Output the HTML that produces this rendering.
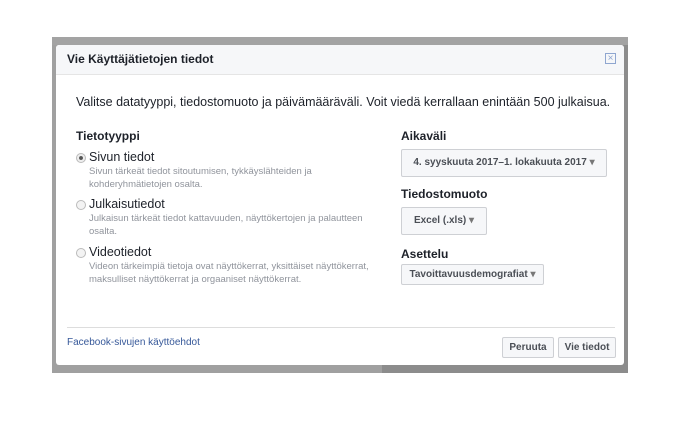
<!DOCTYPE html>
<html><head><meta charset="utf-8"><style>
body{margin:0;width:695px;height:432px;background:#fff;position:relative;overflow:hidden;font-family:"Liberation Sans",Helvetica,Arial,sans-serif;color:#1d2129}
.bd{position:absolute;left:52px;top:37px;width:576px;height:336px;background:#8c8c8c}
.bd .l{position:absolute;left:0;top:0;width:330px;height:336px;background:#a0a0a0}
.bd .top{position:absolute;left:0;top:0;width:576px;height:8px;background:#a3a3a3}
.m{position:absolute;left:56px;top:45px;width:568px;height:320px;background:#fff;border-radius:3px;overflow:hidden}
.hd{height:29px;background:#f6f7f9;border-bottom:1px solid #e5e5e5;font-size:12px;font-weight:bold;line-height:29px;padding-left:11px}
.x{position:absolute;right:8px;top:8px;width:11px;height:11px;border:1px solid #8fa6d0;box-sizing:border-box;color:#8fa6d0;font-size:10px;line-height:9px;text-align:center}
.p{position:absolute;font-size:12px}
.h{font-weight:bold;font-size:12px;position:absolute}
.r{position:absolute;left:20px;font-size:12px}
.r i{position:absolute;left:0;top:3px;width:8px;height:8px;border:1px solid #bbb;border-radius:50%;background:#f3f3f3}
.r b{font-weight:normal;margin-left:13px;font-size:12.5px}
.r div{margin-left:13px;font-size:9.5px;color:#90949c;line-height:12.5px;margin-top:2px}
.btn{position:absolute;background:#f6f7f9;border:1px solid #ced0d4;border-radius:2px;font-size:10px;font-weight:bold;color:#4b4f56;text-align:center;box-sizing:border-box}
.sel:after{content:" \25BE";color:#777}
.ft{position:absolute;left:11px;right:9px;top:282px;border-top:1px solid #ddd}
</style></head><body>
<div class="bd"><div class="l"></div><div class="top"></div></div>
<div class="m">
<div class="hd">Vie Käyttäjätietojen tiedot</div>
<div class="x">×</div>
<div class="p" style="left:20px;top:50px;font-size:12.5px;color:#1d2129">Valitse datatyyppi, tiedostomuoto ja päivämääräväli. Voit viedä kerrallaan enintään 500 julkaisua.</div>
<div class="h" style="left:20px;top:84px">Tietotyyppi</div>
<div class="r" style="top:105px;width:300px"><i style="background:radial-gradient(#555 30%,#eee 40%)"></i><b>Sivun tiedot</b><div>Sivun tärkeät tiedot sitoutumisen, tykkäyslähteiden ja<br>kohderyhmätietojen osalta.</div></div>
<div class="r" style="top:152px;width:300px"><i></i><b>Julkaisutiedot</b><div>Julkaisun tärkeät tiedot kattavuuden, näyttökertojen ja palautteen<br>osalta.</div></div>
<div class="r" style="top:200px;width:320px"><i></i><b>Videotiedot</b><div>Videon tärkeimpiä tietoja ovat näyttökerrat, yksittäiset näyttökerrat,<br>maksulliset näyttökerrat ja orgaaniset näyttökerrat.</div></div>
<div class="h" style="left:345px;top:84px">Aikaväli</div>
<div class="btn sel" style="left:345px;top:104px;width:206px;height:28px;line-height:26px">4. syyskuuta 2017–1. lokakuuta 2017</div>
<div class="h" style="left:345px;top:142px">Tiedostomuoto</div>
<div class="btn sel" style="left:345px;top:162px;width:86px;height:28px;line-height:26px">Excel (.xls)</div>
<div class="h" style="left:345px;top:202px">Asettelu</div>
<div class="btn sel" style="left:345px;top:219px;width:143px;height:21px;line-height:19px">Tavoittavuusdemografiat</div>
<div class="ft"></div>
<div class="p" style="left:11px;top:292px;font-size:10px;color:#365899">Facebook-sivujen käyttöehdot</div>
<div class="btn" style="left:446px;top:292px;width:52px;height:21px;line-height:19px">Peruuta</div>
<div class="btn" style="left:502px;top:292px;width:58px;height:21px;line-height:19px">Vie tiedot</div>
</div>
</body></html>
